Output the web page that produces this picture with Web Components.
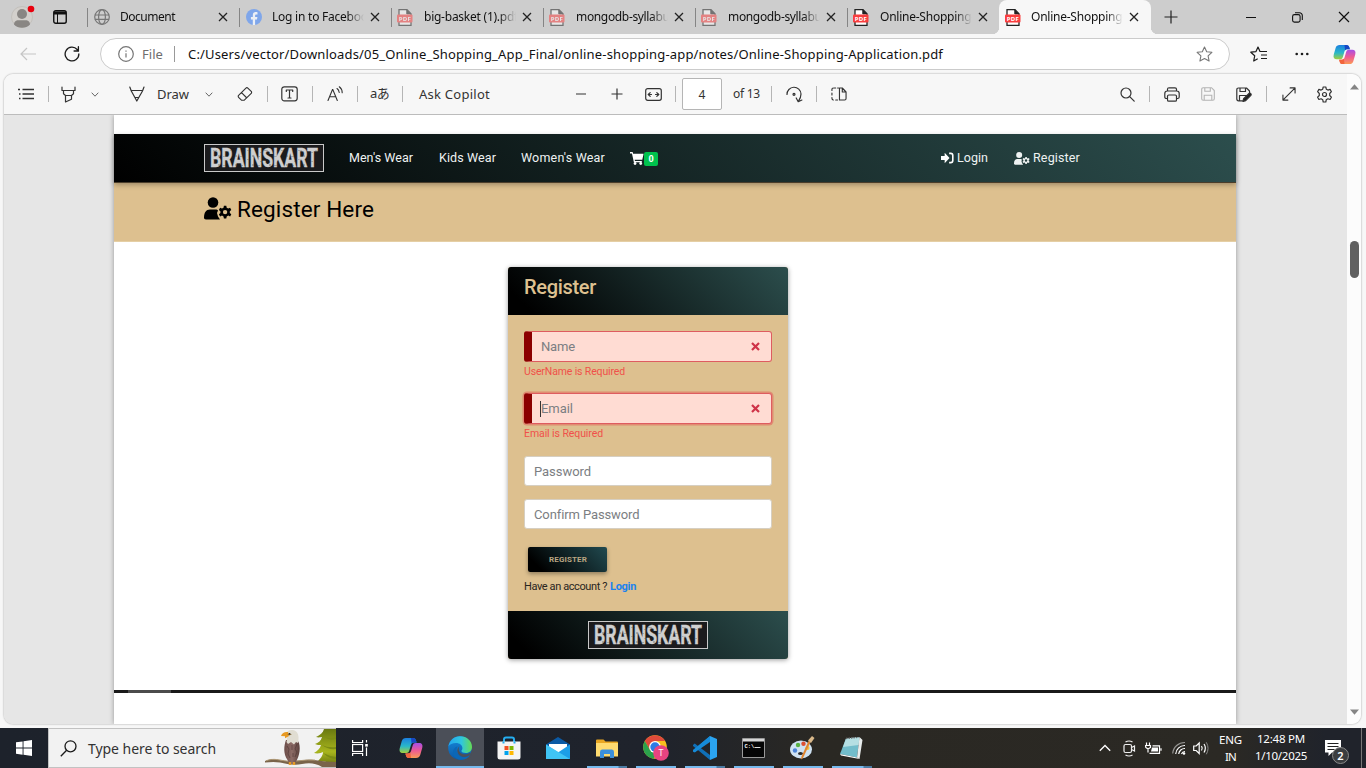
<!DOCTYPE html>
<html lang="en">
<head>
<meta charset="utf-8">
<title>Online-Shopping-Application.pdf</title>
<style>
html,body{margin:0;width:1366px;height:768px;overflow:hidden;background:#f7f7f7}
body{font-family:"Noto Sans","Open Sans",sans-serif;color:#1b1b1b}
</style>
</head>
<body>
<desktop-screen></desktop-screen>
<script>
const S = (b, a = 'stroke="currentColor" fill="none" stroke-width="1.2" stroke-linecap="round" stroke-linejoin="round"') => `<g ${a}>${b}</g>`;
const PDF = (o) => `<g opacity="${o}"><path d="M2 .7h8l4 4v11.6H2z" fill="#fff" stroke="#222" stroke-width="1.3"/><path d="M9.8.7v4.2H14" fill="#222" stroke="#222"/><rect x="0" y="5.4" width="15.5" height="8.2" rx="1" fill="#f93e3e"/><text x="7.8" y="11.7" text-anchor="middle" font-size="6" font-weight="700" font-family="Open Sans,sans-serif" textLength="12" fill="#fff">PDF</text></g>`;
const COPILOT = `<defs><linearGradient id="a" x1="0" y1="0" x2="0" y2="1"><stop offset="0" stop-color="#1c7fe0"/><stop offset=".55" stop-color="#29b8c9"/><stop offset="1" stop-color="#a4cf3b"/></linearGradient><linearGradient id="b" x1="0" y1="0" x2="0" y2="1"><stop offset="0" stop-color="#a64ee8"/><stop offset=".5" stop-color="#ee5a94"/><stop offset="1" stop-color="#fb9a55"/></linearGradient></defs>
<path d="M7 1h7c2 0 2.600 1 3 2.500l.6 2H15c-2 0-2.600 1-3.200 3l-1.500 5c-.5 1.700-1.300 2.500-3 2.500H4C1 16 0 14 .8 11l2-7C3.400 2 4.800 1 7 1z" fill="url(#a)"/><path d="M12 1h2c2 0 2.600 1 3 2.500l.6 2H15c-1.200 0-2 .5-2.400 1.200z" fill="#1747c4"/>
<path d="M17 21h-7c-2 0-2.600-1-3-2.500l-.6-2H9c2 0 2.600-1 3.200-3l1.500-5c.5-1.700 1.300-2.500 3-2.500H20c3 0 4 2 3.200 5l-2 7c-.6 2-2 3-4.200 3z" fill="url(#b)"/><path d="M12 21h-2c-2 0-2.600-1-3-2.500l-.6-2H9c1.200 0 2-.5 2.400-1.200z" fill="#f2643c"/>`;
const USERCOG = `<circle cx="9" cy="5.500" r="5.300"/><path d="M0 20.500c0-5 2-8 6-8h5.500c1.400 0 2 .4 2.500 1l-1 2.500 1 3.500 2 3H2C.6 22.500 0 21.600 0 20.500z"/><path fill-rule="evenodd" d="M19.900 8.800h2.400l.4 2 1.500.8 1.900-.8 1.200 2.100-1.500 1.300v1.800l1.500 1.300-1.200 2.100-1.900-.8-1.500.8-.4 2h-2.400l-.4-2-1.500-.8-1.900.8-1.200-2.100 1.500-1.300v-1.800l-1.500-1.300 1.200-2.100 1.900.8 1.500-.8zm1.200 4.100a2.200 2.200 0 1 0 0 4.400 2.200 2.200 0 0 0 0-4.400z"/>`;
const ICONS = {
profile:[24,24,`<circle cx="11" cy="13" r="10.500" fill="#d3d0cc" stroke="#c3c0bc"/><circle cx="11" cy="10" r="5" fill="#898683"/><path d="M3 20.500c0-3 2.500-4.300 4-4.300h8c1.500 0 4 1.300 4 4.300-2 2.200-5 3.300-8 3.300s-6-1.100-8-3.300z" fill="#898683"/><circle cx="20" cy="5" r="3.300" fill="#e8000d"/>`],
workspace:[14,14,`<rect x=".75" y=".75" width="12.500" height="12.500" rx="2" fill="none" stroke="#111" stroke-width="1.400"/><path d="M1 1.500h12v3H1z" fill="#111"/><path d="M4.500 4v9" stroke="#111"/>`],
globe:[16,16,S(`<circle cx="8" cy="8" r="7.300"/><ellipse cx="8" cy="8" rx="3.400" ry="7.300"/><path d="M.9 6h14.200M.9 10.300h14.200"/>`,'stroke="#777" fill="none" stroke-width="1.200"')],
facebook:[16,16,`<circle cx="8" cy="8" r="8" fill="#7fa6ea"/><path d="M6.800 15.900v-5.400H4.900V8h1.900V6.400c0-2.200 1-3.300 3.200-3.300.5 0 1.100.1 1.500.2v2.100h-1c-1.100 0-1.400.5-1.400 1.300V8h2.300l-.4 2.500H9.100v5.400z" fill="#eceff5"/>`],
pdf:[16,17,PDF(1)], pdfdim:[16,17,PDF(.52)],
close:[10,10,S('<path d="M1 1l8 8M9 1L1 9"/>','stroke="#222" stroke-width="1.300" fill="none"')],
plus:[14,14,S('<path d="M7 .5v13M.5 7h13"/>','stroke="#222" stroke-width="1.200" fill="none"')],
min:[10,10,'<path d="M0 5.500h10" stroke="#111"/>'],
restore:[11,11,S('<rect x=".6" y="2.600" width="7.500" height="7.500" rx="1.800"/><path d="M3 .8h4.500a2.800 2.800 0 0 1 2.800 2.800V8"/>','stroke="#111" stroke-width="1.100" fill="none"')],
winclose:[12,12,S('<path d="M1 1l10 10M11 1L1 11"/>','stroke="#111" stroke-width="1.200"')],
back:[16,14,S('<path d="M16 7H1M7 1L1 7l6 6"/>','stroke="#c5c5c5" stroke-width="1.200" fill="none"')],
reload:[17,17,S('<path d="M15.800 8.500A7.300 7.300 0 1 1 14 3.700L15 5M15.300.8v4.500h-4.600"/>','stroke="#1b1b1b" stroke-width="1.400" fill="none" stroke-linecap="round"')],
info:[16,16,S('<circle cx="8" cy="8" r="7.300"/><path d="M8 7.300v4.200M8 4.500v1.300"/>','stroke="#757575" stroke-width="1.200" fill="none"')],
star:[17,16,S('<path d="M8.500 1l2.200 4.700 5.200.6-3.800 3.600 1 5.100-4.600-2.500L3.900 15l1-5.100L1.100 6.300l5.200-.6z"/>','stroke="#777" stroke-width="1.100" fill="none" stroke-linejoin="round"')],
favs:[18,16,S('<path d="M13 5.500H10L8 1 6 5.600l-5.200.6 3.900 3.600-1 5.200 4-2.300M11 9h6M11 12.500h6M12 5.500h5"/>','stroke="#1b1b1b" stroke-width="1.200" fill="none" stroke-linejoin="round"')],
dots:[14,4,'<g fill="#1b1b1b"><circle cx="1.700" cy="2" r="1.300"/><circle cx="7" cy="2" r="1.300"/><circle cx="12.300" cy="2" r="1.300"/></g>'],
copilot:[24,22,COPILOT],
list:[16,12,S('<path d="M4.500 1.500H16M4.500 6H16M4.500 10.500H16" /><path d="M0 1.500h2M1 6h1.500M1 10.500h1.500"/>','stroke="#333" stroke-width="1.300"')],
marker:[16,17,S('<path d="M1 1v3.500h13V1M2.500 4.500v3.300l2 1.700h6l2-1.700V4.500M4.500 9.500V16l6-2.800V9.500"/>')],
chev:[8,5,S('<path d="M.7.7L4 4.200 7.300.7"/>','stroke="#666" fill="none"')],
pen:[16,16,S('<path d="M.8 1l1.500 4L7.800 15 13.500 5 15 1M2.300 4.500h11.200M6 11.500h3.800"/>')],
eraser:[17,17,S('<path d="M9.500 2.200a1.400 1.400 0 0 1 2 0l3.600 3.600a1.400 1.400 0 0 1 0 2l-7.600 7.400H5L1.700 12a1.400 1.400 0 0 1 0-2zM4.800 7l5.400 5.500"/>')],
tbox:[17,16,S('<rect x=".8" y=".8" width="15.400" height="14" rx="2.500"/><path d="M5.300 5.500V4h6.400v1.500M8.500 4v8M7 12h3"/>')],
aloud:[17,16,S('<path d="M1 14.500L5.500 3.500h.3l4.500 11M2.500 10.800h6.400M10 2.500c1.400 1 2 2.200 2.200 4M12.300.8c2 1.500 2.900 3.500 2.900 6"/>','stroke="#333" fill="none" stroke-width="1.100" stroke-linecap="round"')],
fit:[17,13,S('<rect x=".7" y=".7" width="15.600" height="11.600" rx="2"/><path d="M3.500 6.500h3M10.500 6.500h3M5.200 4.600l-2 1.900 2 1.900M11.800 4.600l2 1.900-2 1.900"/>')],
zminus:[12,12,'<path d="M1 6h10" stroke="#333" stroke-width="1.100"/>'],
zplus:[12,12,'<path d="M.5 6h11M6 .5v11" stroke="#333" stroke-width="1.200"/>'],
rotate:[17,17,S('<path d="M1 8.500A7 7 0 0 1 15 8c0 2.700-1 5-2.600 7.300M10.200 12l2 3.700 3.700-1.700"/><circle cx="8" cy="8.300" r="1"/>')],
pages:[17,14,S('<path d="M8 1H7M5 1H3.500M1 3.500V2.300Q1 1 2.500 1M1 6v2M1 10.500v.8Q1 13 2.500 13M5 13h2"/><path d="M9 1h3l4 4v6.500q0 1.500-1.500 1.500H9zM12 1v4h4"/>')],
search:[15,15,S('<circle cx="6" cy="6" r="5"/><path d="M9.700 9.700l4.500 4.500"/>')],
print:[16,15,S('<path d="M3.500 11.500H2.400Q.8 11.500.8 10V6.500q0-2.500 2.500-2.500h9.400q2.500 0 2.500 2.500V10q0 1.500-1.600 1.500h-1.100M3.500 4V2.300Q3.500.8 5 .8h6q1.500 0 1.500 1.500V4"/><rect x="3.500" y="8" width="9" height="6.200" rx="1.300"/>')],
save:[14,14,S('<path d="M2.200.7h8.300l2.800 2.800v8.300q0 1.500-1.500 1.500H2.200q-1.500 0-1.500-1.500V2.200Q.7.700 2.200.7zM3.800.7v3.500h5.500V.7M3.200 13.300V8.200h7.600v5.100"/>','stroke="#b4b4b4" fill="none" stroke-width="1.100"')],
saveas:[16,15,S('<path d="M6.500 13.800H2.500q-1.700 0-1.700-1.700V2.700Q.8 1 2.500 1h8L13.500 4v3M4 1v3.500h5.500V1M3.500 13.500V8.500H11"/><path d="M7 14.500l.6-2.800L13 6.500q1-.6 1.800.1.700.8.100 1.700L9.700 13.600z" fill="#222"/>')],
expand:[15,15,S('<path d="M1.200 13.800L13.800 1.200M8.700 1h5.300v5.300M1 8.700V14h5.300"/>')],
gear:[17,17,S('<path d="M7.200 1h2.600l.5 2.200 1.600.9 2.200-.7 1.300 2.300L13.700 7.500v2l1.700 1.700-1.300 2.300-2.200-.7-1.600.9L9.800 16H7.200l-.5-2.300-1.600-.9-2.200.7-1.300-2.300 1.700-1.700v-2L1.600 5.700l1.300-2.300 2.200.7 1.600-.9z"/><circle cx="8.500" cy="8.500" r="2"/>')],
up:[9,6,'<path d="M4.500.3L9 5.500H0z" fill="#858585"/>'], down:[9,6,'<path d="M4.500 5.700L9 .5H0z" fill="#858585"/>'],
cart:[18,16,'<path d="M0 0h3.400l.6 2h13.500l-1.700 7.600H6l.4 1.500h8.800v1.600H5L2.500 1.900H0z" fill="#fff"/><circle cx="6.500" cy="14.200" r="1.800" fill="#fff"/><circle cx="13.800" cy="14.200" r="1.800" fill="#fff"/>'],
login:[16,14,'<path d="M0 4.700h4.500V1L10.500 7l-6 6V9.300H0z" fill="#fff"/><path d="M10 1.500h2Q14.500 1.500 14.500 4v6q0 2.500-2.500 2.500h-2" fill="none" stroke="#fff" stroke-width="2"/>'],
usercog:[28,23,`<g fill="currentColor">${USERCOG}</g>`],
cross:[9,9,'<path d="M1 1l7 7M8 1L1 8" stroke="#cf3348" stroke-width="2.200"/>'],
windows:[16,16,'<path d="M0 2.300L6.600 1.400v6.200H0zM7.500 1.200L16 0v7.600H7.500zM0 8.500h6.600v6.200L0 13.800zM7.500 8.500H16V16l-8.500-1.200z" fill="#fff"/>'],
tsearch:[17,17,S('<circle cx="10.500" cy="6.300" r="5.500"/><path d="M6.600 10.300L.8 16.200"/>','stroke="#1b1b1b" fill="none" stroke-width="1.300"')],
taskview:[17,16,S('<path d="M.6 0v2.500h10V0M.6 16v-2.500h10V16"/><rect x=".6" y="4.500" width="10" height="7"/><path d="M14.500 0v2.500M14.500 7.500V16"/>','stroke="#fff" fill="none" stroke-width="1.200"')+'<rect x="13.200" y="4" width="2.600" height="2.600" fill="#fff"/>'],
edge:[24,24,`<defs><linearGradient id="e" x2="1"><stop offset="0" stop-color="#25a7ee"/><stop offset=".55" stop-color="#2fc6df"/><stop offset="1" stop-color="#66dc52"/></linearGradient><linearGradient id="f" x2="0" y2="1"><stop offset="0" stop-color="#168bdc"/><stop offset="1" stop-color="#0c59a8"/></linearGradient></defs><circle cx="12" cy="12" r="11.800" fill="url(#f)"/><path d="M.4 10.500C1.500 4 6.400.2 12 .2 19 .2 24 5 24 11c0 3.800-2.800 6-6 6-2.700 0-4.600-.8-4.600-2 0-.7 1-1.200 1-3C14.400 9.300 11.700 7 8 7 4.500 7 1.500 8.500.4 10.500z" fill="url(#e)"/><path d="M9.500 10.200c-2.600 3.600-.4 11 6.600 11 2.600 0 4.500-.9 6-2.100C19.500 24 12 25.500 7 21.500c-3.400-3-2.700-9.500 2.500-11.300z" fill="#0b67b7"/><path d="M11.600 10.300c-2 2.600-.8 6.600 3.200 7.700 3.100.8 5.700-.1 7.500-1.200.6-.2.700.2.300.9-2 2.800-5 3.600-7.500 3.200-5.800-.9-7.600-7.600-3.500-10.600z" fill="#4b4f58"/><path d="M24 11v7l-2 4-3 2h5z" fill="#4b4f58"/>`],
store:[24,24,'<path d="M7 6V3.500Q7 1.500 9 1.500h6q2 0 2 2V6" stroke="#25aef0" stroke-width="2" fill="none"/><path d="M.5 5.500h23V21q0 2.500-2.500 2.500H3Q.5 23.500.5 21z" fill="#f4f4f4"/><path d="M7.500 10h4v4h-4z" fill="#f05125"/><path d="M12.500 10h4v4h-4z" fill="#7eb900"/><path d="M7.500 15h4v4h-4z" fill="#00a3ee"/><path d="M12.500 15h4v4h-4z" fill="#ffb800"/><path d="M5.500 5.500h2v2h-2zM16.500 5.500h2v2h-2z" fill="#25aef0"/>'],
mail:[24,22,'<path d="M0 7.500L12 0l12 7.500V12H0z" fill="#0b5aa5"/><path d="M3 7h18v9H3z" fill="#fff"/><path d="M0 7.500l12 8 12-8V22H0z" fill="#1c9ee8"/><path d="M0 22V7.500l12 7.300L24 22z" fill="#40c4f5"/>'],
folder:[22,19,'<path d="M0 1.500Q0 .5 1 .5h6.500l2 2H21q1 0 1 1V17H0z" fill="#e9a723"/><path d="M0 4h22v13.500H0z" fill="#ffdb70"/><path d="M4 19v-6q0-2.500 2-2.500h10q2 0 2 2.500v6h-4v-4H8v4z" fill="#3c8fdb"/>'],
chrome:[26,26,'<circle cx="12" cy="12" r="11.800" fill="#f9bf1e"/><path d="M1.800 6A11.800 11.800 0 0 1 22.200 6H12L6.900 15z" fill="#df4a3b"/><path d="M1.800 6A11.800 11.800 0 0 0 10.500 23.700l6.400-8.700H7z" fill="#2ba24c"/><circle cx="12" cy="12" r="5.900" fill="#fff"/><circle cx="12" cy="12" r="4.700" fill="#2c7be5"/><circle cx="18" cy="18" r="7.800" fill="#e84381"/><text x="18" y="21.200" text-anchor="middle" font-family="Open Sans,sans-serif" font-size="9" fill="#fff">T</text>'],
vscode:[24,24,'<path d="M17 1L3.500 14.500 1 16.300l-1-.8v-1.300L17 0z" fill="#1a85cf"/><path d="M0 9l1.700-1.500L17 19v5L0 10z" fill="#1070b8"/><path d="M0 15l1.700 1.500L17 6V0L0 14z" fill="#168bd8"/><path d="M17 0l7 3v18l-7 3z" fill="#2ba4f1"/>'],
cmd:[23,20,'<path d="M.5.500h22v19H.5z" fill="#050505" stroke="#9a9a9a"/><path d="M1 1h21v2.500H1z" fill="#d6d6d6"/><text x="2.500" y="9.500" font-family="Liberation Mono,monospace" font-size="5.500" font-weight="700" fill="#fff">C:\\</text><path d="M12.500 9.500h6" stroke="#ddd"/>'],
paint:[25,24,'<ellipse cx="11" cy="13.500" rx="11" ry="9" fill="#cfe2f2"/><ellipse cx="10.500" cy="17.500" rx="2.500" ry="1.500" fill="#28292b"/><circle cx="5" cy="14.500" r="2.200" fill="#4c84d8"/><circle cx="8" cy="9" r="2.200" fill="#58b144"/><circle cx="13.500" cy="7.800" r="2.200" fill="#dc4f32"/><circle cx="17.500" cy="12" r="2" fill="#f3c33c"/><path d="M20.500 6L13 22l-2 1.500.5-3L18.500 5z" fill="#df8530"/><path d="M18 4.500L22 0l2.500 2-3.500 5z" fill="#dab98b"/>'],
notepad:[24,22,'<path d="M6 1.500L19.500 0 17 20.500 0 17z" fill="#72bdcb"/><path d="M6 1.500L19.500 0l-1 8L3 10z" fill="#b5dfe3"/><path d="M19.500 0l3 3L19.500 22 17 20.500z" fill="#e8ecec"/><path d="M0 17l17 3.500 2.500 1.500L1 18.500z" fill="#fff"/><path d="M6 1.500L19.500 0" stroke="#666" stroke-width="1.500" stroke-dasharray="1.500 1"/>'],
tchev:[12,8,S('<path d="M.8 6.800L6 1.500l5.200 5.300"/>','stroke="#fff" fill="none" stroke-width="1.300"')],
meet:[13,17,S('<rect x="1" y="4.500" width="7.500" height="8" rx="1.500"/><path d="M8.500 7.500L11.500 6v5l-3-1.500M2.500 2q3.500-2 7 0M2.500 15q3.500 2 7 0"/>','stroke="#eee" fill="none" stroke-width="1.200"')],
battery:[17,13,S('<path d="M4.500 11.300h10V3.800h-7M16 6.300v2.500"/><path d="M1.500.5v2.500M4.500.5v2.500M.5 3.500h5v2L3 7 .8 5.500zM3 7v3.500"/>','stroke="#fff" fill="none" stroke-width="1.200"')+'<path d="M7 5.500h6v4H6z" fill="#fff"/>'],
wifi:[14,14,S('<path d="M.7 12.500A12 12 0 0 1 13 1.500" opacity=".5"/><path d="M3.700 13A9 9 0 0 1 13 4.500M6.700 13A6 6 0 0 1 13 7.500M9.500 13A4 4 0 0 1 13 10.500"/>','stroke="#fff" fill="none" stroke-width="1.200"')+'<circle cx="12" cy="12.500" r="1.300" fill="#fff"/>'],
sound:[16,14,S('<path d="M.7 5v4.500h2.500l3 3V2l-3 3zM8.500 5q1.500 2.200 0 4.500M11 3q2.700 4 0 8.500"/>','stroke="#fff" fill="none" stroke-width="1.200"')+'<path d="M13.300 1.300q3.500 6 0 12" stroke="#888" fill="none"/>'],
notify:[24,24,'<path d="M0 0h16v12.500H7L3.500 16v-3.500H0z" fill="#fff"/><path d="M2.500 3.500h11M2.500 6.500h11M2.500 9.500h7" stroke="#222" stroke-width="1.200"/><circle cx="15.500" cy="15.500" r="8" fill="#3b3d40" stroke="#8a8a8a"/><text x="15.500" y="19.500" text-anchor="middle" font-family="Noto Sans,sans-serif" font-weight="600" font-size="11" fill="#fff">2</text>'],
eagle:[72,38,`<defs><linearGradient id="g" x2="0" y2="1"><stop offset="0" stop-color="#69780f"/><stop offset=".6" stop-color="#a8b51d"/><stop offset="1" stop-color="#616e0d"/></linearGradient><linearGradient id="h" x2="1"><stop offset="0" stop-color="#6b4c48"/><stop offset=".5" stop-color="#8d6c67"/><stop offset="1" stop-color="#5b403c"/></linearGradient></defs>
<path d="M72 0H60c-1 4-4 6-8 8 3 1 5 0 6 0-1 4-4 6-7 7 2 1 4 1 6 1-1 4-4 6-7 8 4 1 7 0 9-1 0 4-3 7-5 9 7 0 14 2 18 6z" fill="url(#g)"/><path d="M61 8q4 2 11 0v2q-7 2-11-2zM58 16q6 3 14 2v2q-8 1-14-4zM59 24q6 3 13 4v2q-7 0-13-6z" fill="#7b8b14"/>
<path d="M1 32c8-3.500 13-1 21 0 10 1 17-2 28-1 8 1 15 2 22 2v5H58c-6-4-13-4.500-20-3-9 2-15-.5-22-1.500-6-1-10-.5-15 0z" fill="#79644a"/><path d="M2 31.800c8-3 13-.5 21 .3 10 1 17-2 28-1" stroke="#ad9773" fill="none"/>
<path d="M22 11c-2 5-3 14 1.500 20l2 4h5c4-5 6.500-14 4.500-21l-2-4z" fill="url(#h)"/><path d="M23 17l2 3-1 5 2 4M33 15l-2 5 2 3-2 5M28 16v5M29 24v4" stroke="#49322f" fill="none" opacity=".55"/><path d="M22 5c1-3 3.500-4.500 6.500-4C33 1.500 35 5 34.500 11l-.5 3-2-1-2 2.500-3-2.500-3 2-1.500-2c1-2 .5-5-.5-8z" fill="#e0ddd2"/><path d="M24 3c-3-.5-6 .5-7 4l4 .3v2L25 7z" fill="#e79a24"/><circle cx="25.500" cy="5.200" r="1.100" fill="#242424"/><path d="M23.500 5.500h4" stroke="#8a6a2c" stroke-width=".6"/><path d="M26 33v3M30 33v3" stroke="#e59b28" stroke-width="2.400" fill="none"/>`]
};
class Base extends HTMLElement {
  constructor(){ super(); this.attachShadow({mode:'open'}); }
  connectedCallback(){ this.shadowRoot.innerHTML = this.render(); }
  attr(n, d=''){ return this.getAttribute(n) ?? d; }
}
const define = (n, r) => customElements.define(n, class extends Base { render(){ return r(this); } });

/* name plus an optional drawn width and height */
define('ui-icon', e => {
  const [w,h,b] = ICONS[e.attr('name')], W = e.attr('w', w), H = e.attr('h', h);
  return `<style>:host{display:block;flex:none;width:${W}px;height:${H}px}svg{display:block}</style><svg width="${W}" height="${H}" viewBox="0 0 ${w} ${h}" preserveAspectRatio="none">${b}</svg>`;
});
/* single line of text whose tracking is adjusted to fill the width "w" */
customElements.define('ui-text', class extends Base {
  connectedCallback(){
    const w = +this.attr('w', 0);
    this.shadowRoot.innerHTML = `<style>:host{display:block;flex:none;white-space:pre;${w ? `width:${w}px` : ''}}span{display:inline-block}</style><span><slot></slot></span>`;
    if (w) {
      const real = this.shadowRoot.querySelector('span').getBoundingClientRect().width;
      this.style.letterSpacing = ((w - real) / this.textContent.length).toFixed(4) + 'px';
    }
  }
});
define('ui-sep', () => `<style>:host{display:block;flex:none;width:1px;height:16px;background:#b5b5b5}</style>`);

define('browser-tab', e => `<style>
:host{display:flex;flex:none;box-sizing:border-box;width:152px;height:34px;align-items:center;border-left:1px solid transparent;font-size:12px;color:#111;position:relative}
:host::before{content:"";position:absolute;left:-1px;top:8px;height:19px;width:1px;background:#858585}
:host([active])::before{display:none}
:host([active]){background:#f7f7f7;border-radius:8px 8px 0 0}
:host([active])::after{content:"";position:absolute;left:-8px;right:-7px;bottom:0;height:7px;background:radial-gradient(circle at 0 0,transparent 7px,#f7f7f7 7.500px) left/7px 7px no-repeat,radial-gradient(circle at 100% 0,transparent 7px,#f7f7f7 7.500px) right/7px 7px no-repeat}
ui-icon.fav{margin-left:6px}
:host([icon^="pdf"]) .fav{margin-left:5px;margin-right:1px}
.clip{flex:none;width:92px;margin-left:10px;overflow:hidden;line-height:20px;-webkit-mask:linear-gradient(90deg,#000 75px,transparent 92px)}
ui-icon.x{margin-left:6px}
:host([active]) .clip{margin-left:9px}
</style><ui-icon class="fav" name="${e.attr('icon')}"></ui-icon><div class="clip"><ui-text w="${e.attr('tw')}">${e.attr('label')}</ui-text></div><ui-icon class="x" name="close"></ui-icon>`);

define('tab-strip', () => `<style>:host{display:flex;height:34px;background:#cdcdcd;align-items:center}</style>
<ui-icon name="profile" style="margin-left:11px;margin-top:-3px"></ui-icon><ui-icon name="workspace" style="margin:0 20px 0 18px"></ui-icon>
<browser-tab icon="globe" label="Document" tw="55"></browser-tab>
<browser-tab icon="facebook" label="Log in to Facebook" tw="102"></browser-tab>
<browser-tab icon="pdfdim" label="big-basket (1).pdf" tw="94"></browser-tab>
<browser-tab icon="pdfdim" label="mongodb-syllabus" tw="99"></browser-tab>
<browser-tab icon="pdfdim" label="mongodb-syllabus" tw="99"></browser-tab>
<browser-tab icon="pdf" label="Online-Shopping-" tw="95"></browser-tab>
<browser-tab icon="pdf" label="Online-Shopping-" tw="95" active></browser-tab>
<ui-icon name="plus" style="margin-left:13px"></ui-icon><ui-icon name="min" style="margin-left:68px"></ui-icon><ui-icon name="restore" style="margin-left:36px"></ui-icon><ui-icon name="winclose" style="margin-left:35px"></ui-icon>`);

define('address-bar', () => `<style>:host{display:flex;height:40px;align-items:center;background:#f7f7f7}
.pill{display:flex;align-items:center;box-sizing:border-box;width:1130px;height:32px;margin-left:19px;border:1px solid #cbcbcb;border-radius:16px;background:#fff;font-size:13px;line-height:20px;color:#111}
.file{color:#6e6e6e}</style>
<ui-icon name="back" style="margin-left:20px"></ui-icon><ui-icon name="reload" w="16" h="16" style="margin-left:28px"></ui-icon>
<div class="pill" style="margin-left:20px"><ui-icon name="info" style="margin-left:17px"></ui-icon><ui-text class="file" w="21" style="margin-left:8px">File</ui-text><ui-sep style="margin-left:11px;background:#999"></ui-sep><ui-text w="755" style="margin-left:13px">C:/Users/vector/Downloads/05_Online_Shopping_App_Final/online-shopping-app/notes/Online-Shopping-Application.pdf</ui-text><ui-icon name="star" style="margin-left:253px"></ui-icon></div>
<ui-icon name="favs" style="margin-left:20px"></ui-icon><ui-icon name="dots" style="margin-left:27px"></ui-icon><ui-icon name="copilot" w="23" h="21" style="margin-left:24px"></ui-icon>`);

define('pdf-toolbar', () => {
  const i = (n, m, x='') => `<ui-icon name="${n}" style="margin-left:${m}px" ${x}></ui-icon>`, s = m => `<ui-sep style="margin-left:${m}px"></ui-sep>`;
  return `<style>:host{display:flex;box-sizing:border-box;height:41px;align-items:center;background:#f7f7f7;border-bottom:1px solid #bcbcbc;color:#333;font-size:13px;line-height:20px}
.page{box-sizing:border-box;width:40px;height:32px;margin-left:6px;border:1px solid #b5b5b5;border-radius:2px;background:#fff;text-align:center;line-height:31px;font-size:12px}</style>
${i('list',14)}${s(14)}${i('marker',12)}${i('chev',14)}${i('pen',30)}<ui-text w="32" style="margin-left:12px">Draw</ui-text>${i('chev',16)}${i('eraser',24,'w="16" h="16"')}${s(14)}${i('tbox',13)}${s(14)}${i('aloud',14)}${s(13)}<ui-text w="19" style="margin-left:12px;margin-top:-2px;font-family:'Noto Sans','Noto Sans CJK JP',sans-serif;font-size:13px">aあ</ui-text>${s(13)}<ui-text w="71" style="margin-left:16px">Ask Copilot</ui-text>
${i('zminus',85)}${i('zplus',24)}${i('fit',22)}${s(13)}<div class="page">4</div><ui-text w="27" style="margin-left:11px;font-size:12px">of 13</ui-text>${s(11)}${i('rotate',14)}${s(13)}${i('pages',14,'w="16"')}
${i('search',273)}${s(14)}${i('print',14)}${i('save',21)}${i('saveas',21)}${s(14)}${i('expand',15,'w="14" h="14"')}${i('gear',20)}`;
});

define('brand-logo', () => `<style>:host{display:block;flex:none;box-sizing:border-box;width:120px;height:28px;border:1.500px solid #c9c9c9;background:#1b1b1d}svg{display:block}</style>
<svg width="118" height="26" viewBox="0 0 118 26"><defs><pattern id="p" width="17" height="9" patternUnits="userSpaceOnUse"><rect width="17" height="9" fill="#cfcfcf"/><path d="M1 2h3v1H1zM8 5h4v1H8zM13 1h2v2h-2zM4 7h2v1H4z" fill="#a5a5a5"/></pattern></defs><text x="5" y="22" font-family="Roboto,sans-serif" font-weight="700" font-size="25.500" textLength="108" lengthAdjust="spacingAndGlyphs" fill="url(#p)" stroke="#cfcfcf" stroke-width=".4">BRAINSKART</text></svg>`);

define('shop-nav', () => `<style>:host{display:flex;box-sizing:border-box;height:49px;align-items:center;padding-left:90px;background:linear-gradient(45deg,#000,#2c4e4d);color:#eef2f2;font-size:12.500px;line-height:18px;box-shadow:0 2px 5px rgba(0,0,0,.28);position:relative;border-bottom:1px solid #4a3d2a}
.badge{width:14px;height:14px;margin-top:2px;border-radius:2px;background:#00c24d;color:#fff;font-size:9px;font-weight:700;line-height:14px;text-align:center}</style>
<brand-logo></brand-logo><ui-text w="64" style="margin-left:25px">Men's Wear</ui-text><ui-text w="57" style="margin-left:26px">Kids Wear</ui-text><ui-text w="84" style="margin-left:25px">Women's Wear</ui-text>
<ui-icon name="cart" w="14" h="13" style="margin-left:25px"></ui-icon><div class="badge">0</div>
<ui-icon name="login" w="13" h="12" style="margin-left:283px"></ui-icon><ui-text w="31" style="margin-left:3px">Login</ui-text>
<ui-icon name="usercog" w="16" h="13" style="margin-left:26px"></ui-icon><ui-text w="47" style="margin-left:3px">Register</ui-text>`);

define('page-banner', () => `<style>:host{display:flex;box-sizing:border-box;height:59px;padding:0 0 7px 90px;align-items:center;background:#ddc08f;color:#000;font-size:22.500px;line-height:28px;border-bottom:1px solid #e5cfa5}</style>
<ui-icon name="usercog"></ui-icon><ui-text w="137" style="margin-left:5px">Register Here</ui-text>`);

define('form-field', e => `<style>
:host{display:block}
.box{display:flex;box-sizing:border-box;height:30px;align-items:center;padding-left:9px;border:1px solid #d6cfc2;border-radius:3px;background:#fff;color:#7b7e82;font-size:13px}
:host([error]) .box{height:31px;border:1px solid #de5c60;border-left:8px solid #8b0000;background:#ffdcd3}
:host([focused]) .box{box-shadow:0 0 0 1.500px rgba(226,96,90,.55)}
:host([focused]) .box ui-text{border-left:1px solid #333;margin-left:-1px;line-height:16px}
ui-icon{margin:0 11px 0 auto}
.msg{height:20px;line-height:20px;font-size:10.500px;color:#f0504a}
</style><div class="box"><ui-text w="${e.attr('tw')}">${e.attr('label')}</ui-text>${e.hasAttribute('error') ? '<ui-icon name="cross"></ui-icon>' : ''}</div>${e.hasAttribute('error') ? `<div class="msg"><ui-text w="${e.attr('mw')}">${e.attr('error')}</ui-text></div>` : ''}`);

define('register-card', () => `<style>
:host{display:flex;flex-direction:column;width:280px;height:392px;border-radius:3px;overflow:hidden;background:#ddc08f;box-shadow:0 1px 5px rgba(0,0,0,.4)}
header,footer{flex:none;box-sizing:border-box;height:48px;background:linear-gradient(45deg,#000 8%,#2c4e4d)}
header{padding:7px 16px;color:#dec190;font-size:20px;font-weight:500;line-height:27px}
footer{display:grid;place-items:center}
main{flex:1;padding:16px 16px 0 16px;display:flex;flex-direction:column}
button{align-self:flex-start;margin:18px 0 0 4px;width:79px;height:25px;padding:0 0 0 21px;border:0;border-radius:2px;background:linear-gradient(45deg,#000 15%,#214a50);box-shadow:0 2px 4px rgba(0,0,0,.35);font:700 8px Roboto,sans-serif;color:#b9a582}
.foot{display:flex;margin-top:6px;font-size:11px;line-height:18px;color:#29251e}
b{color:#1c82ee;font-weight:700}
</style><header><ui-text w="72">Register</ui-text></header>
<main><form-field label="Name" tw="34" error="UserName is Required" mw="101"></form-field>
<form-field label="Email" tw="32" error="Email is Required" mw="79" focused style="margin-top:11px"></form-field>
<form-field label="Password" tw="57" style="margin-top:12px"></form-field>
<form-field label="Confirm Password" tw="105" style="margin-top:13px"></form-field>
<button><ui-text w="38">REGISTER</ui-text></button>
<div class="foot"><ui-text w="83">Have an account ?</ui-text><b><ui-text w="26" style="margin-left:3px">Login</ui-text></b></div></main>
<footer><brand-logo></brand-logo></footer>`);

define('pdf-page', () => `<style>:host{display:flex;flex-direction:column;width:1122px;height:609px;background:#fff;box-shadow:0 0 5px rgba(0,0,0,.35);font-family:Roboto,sans-serif}
shop-nav{margin-top:19px}register-card{margin:25px 0 31px 394px}
.rule{height:3px;padding-left:14px;background:#191919}.rule i{display:block;width:43px;height:3px;background:#4b4b4b}</style>
<shop-nav></shop-nav><page-banner></page-banner><register-card></register-card><div class="rule"><i></i></div>`);

define('scroll-rail', () => `<style>:host{display:flex;flex-direction:column;align-items:center;width:14px;background:#fcfcfc}
.thumb{width:9px;height:37px;margin-top:151px;border-radius:5px;background:#606060}</style><ui-icon name="up" style="margin-top:10px"></ui-icon><div class="thumb"></div><ui-icon name="down" style="margin:auto 0 9px"></ui-icon>`);

define('pdf-viewer', () => `<style>:host{display:flex;width:1357px;height:650px;margin-left:4px;border-radius:9px;overflow:hidden;box-shadow:0 0 2px rgba(0,0,0,.4)}
.col{width:1343px}.desk{height:609px;padding-left:110px;background:#e6e6e6;overflow:hidden}</style>
<div class="col"><pdf-toolbar></pdf-toolbar><div class="desk"><pdf-page></pdf-page></div></div><scroll-rail></scroll-rail>`);

define('task-button', e => `<style>:host{display:grid;flex:none;place-items:center;box-sizing:border-box;width:49px;height:40px;position:relative}
:host([active]){background:#4b4f58;width:48px}
i{position:absolute;left:5px;bottom:0;width:40px;height:2px;background:#76b9ed}
:host([active]) i{left:0;width:48px}:host([multi]) i{background:linear-gradient(90deg,#76b9ed 31px,#4b7ba3 32px)}</style><ui-icon name="${e.attr('icon')}"></ui-icon>${e.hasAttribute('open')?'<i></i>':''}`);

define('task-bar', () => `<style>:host{display:flex;height:40px;align-items:center;background:linear-gradient(90deg,#1d222b 0,#1f232c 48%,#2a2823 60%,#2b2924 90%,#20232b 97%);color:#fff;font-size:11.500px}
.search{display:flex;box-sizing:border-box;width:288px;height:40px;margin-left:16px;align-items:center;background:#f2f2f2;border:1px solid #c2c2c2;border-right:0;color:#333;font-size:14px;line-height:20px}
.two{display:flex;flex-direction:column;align-items:center;line-height:17px;margin-top:-1px}
.end{width:1px;height:40px;background:#777}</style>
<ui-icon name="windows" style="margin-left:16px"></ui-icon>
<div class="search"><ui-icon name="tsearch" style="margin-left:11px"></ui-icon><ui-text w="128" style="margin-left:11px;margin-top:1px">Type here to search</ui-text><ui-icon name="eagle" style="margin-left:auto"></ui-icon></div>
<ui-icon name="taskview" style="margin-left:16px"></ui-icon><ui-icon name="copilot" style="margin:0 13px 0 30px"></ui-icon>
<task-button icon="edge" active open></task-button><task-button icon="store"></task-button><task-button icon="mail"></task-button><task-button icon="folder" open multi></task-button><task-button icon="chrome" open></task-button><task-button icon="vscode" open multi></task-button><task-button icon="cmd" open></task-button><task-button icon="paint" open></task-button><task-button icon="notepad" open multi></task-button>
<ui-icon name="tchev" style="margin-left:223px"></ui-icon><ui-icon name="meet" style="margin-left:12px"></ui-icon><ui-icon name="battery" style="margin-left:9px"></ui-icon><ui-icon name="wifi" style="margin-left:10px"></ui-icon><ui-icon name="sound" style="margin-left:7px"></ui-icon>
<div class="two" style="margin-left:10px"><ui-text w="23">ENG</ui-text><ui-text w="11">IN</ui-text></div><div class="two" style="margin-left:13px;margin-top:-3px"><ui-text w="48">12:48 PM</ui-text><ui-text w="52">1/10/2025</ui-text></div>
<ui-icon name="notify" style="margin:7px 12px 0 18px"></ui-icon><div class="end"></div>`);

define('desktop-screen', () => `<style>:host{display:flex;flex-direction:column;width:1366px;height:768px;background:#f7f7f7}task-bar{margin-top:4px}pdf-viewer{flex:none}</style><tab-strip></tab-strip><address-bar></address-bar><pdf-viewer></pdf-viewer><task-bar></task-bar>`);
</script>
</body>
</html>
